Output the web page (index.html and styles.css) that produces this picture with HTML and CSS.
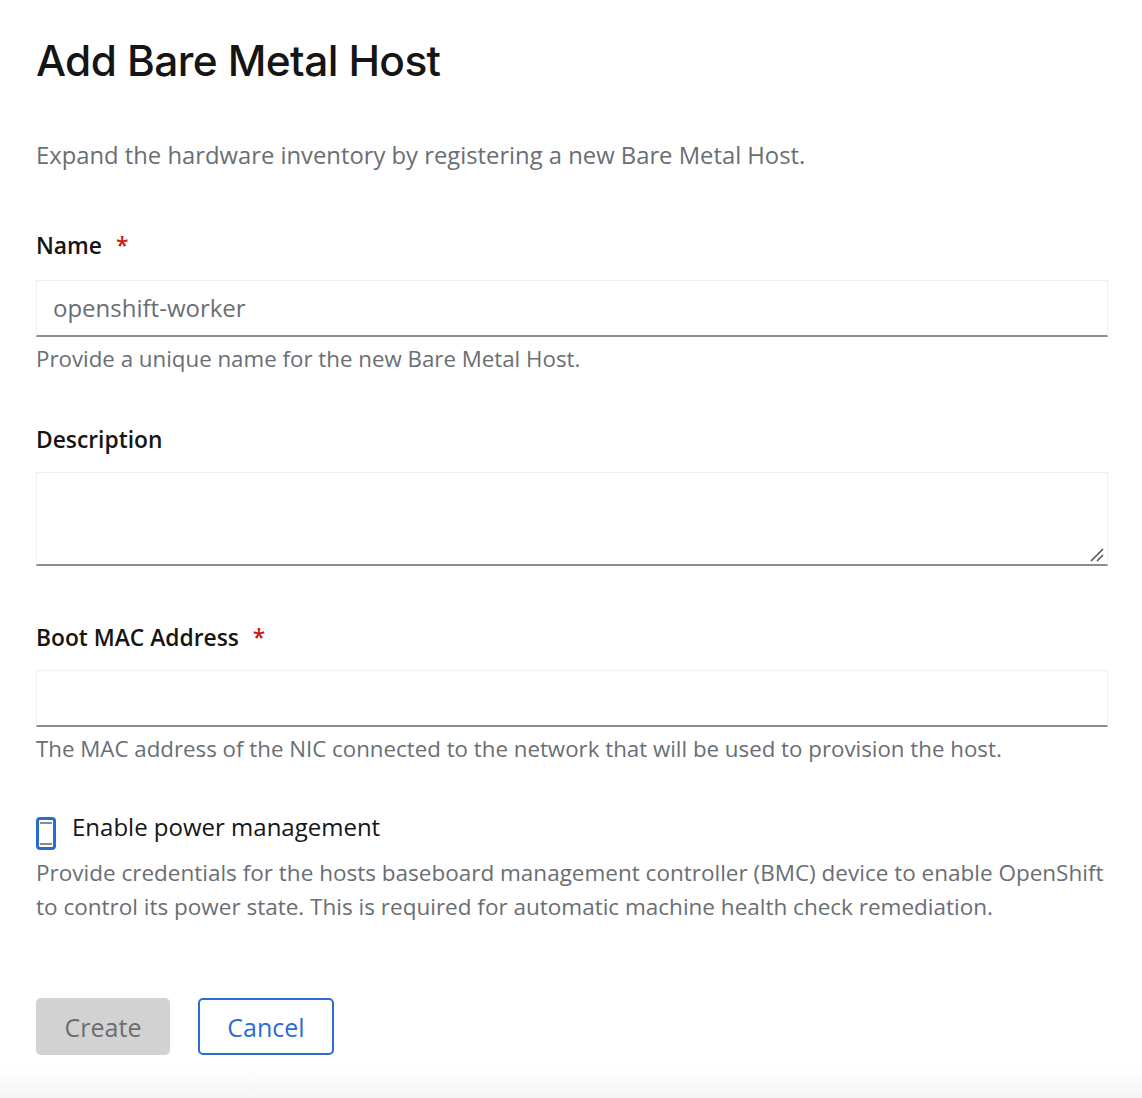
FILE: index.html
```html
<!DOCTYPE html>
<html>
<head>
<meta charset="utf-8">
<link rel="stylesheet" href="styles.css">
</head>
<body>
<div class="page">
  <h1 class="title">Add Bare Metal Host</h1>
  <p class="lead">Expand the hardware inventory by registering a new Bare Metal Host.</p>
  <form class="form">
    <div class="group g-name">
      <label class="label">Name <span class="req">*</span></label>
      <div class="input">openshift-worker</div>
      <div class="help">Provide a unique name for the new Bare Metal Host.</div>
    </div>
    <div class="group g-desc">
      <label class="label">Description</label>
      <div class="textarea">
        <svg class="grip" width="14" height="14" viewBox="0 0 14 14"><path d="M1 13 L13 1 M7 13 L13 7" stroke="#555" stroke-width="1.6" fill="none"/></svg>
      </div>
    </div>
    <div class="group g-mac">
      <label class="label">Boot MAC Address <span class="req">*</span></label>
      <div class="input"></div>
      <div class="help">The MAC address of the NIC connected to the network that will be used to provision the host.</div>
    </div>
    <div class="group g-check">
      <div class="check-row">
        <span class="checkbox"></span>
        <span class="check-label">Enable power management</span>
      </div>
      <div class="check-desc">Provide credentials for the hosts baseboard management controller (BMC) device to enable OpenShift to control its power state. This is required for automatic machine health check remediation.</div>
    </div>
    <div class="actions">
      <button type="button" class="btn btn-create">Create</button>
      <button type="button" class="btn btn-cancel">Cancel</button>
    </div>
  </form>
</div>
<div class="fade"></div>
</body>
</html>
```
FILE: styles.css
```css
html, body {
  margin: 0;
  padding: 0;
  background: #fff;
}
body {
  font-family: "Open Sans", "Liberation Sans", sans-serif;
  color: #151515;
  height: 1098px;
  overflow: hidden;
  position: relative;
}
.page {
  padding: 0 34px 0 36px;
}
.title {
  margin: 0;
  padding-top: 34px;
  font-family: "Inter", "Open Sans", sans-serif;
  font-weight: 500;
  font-size: 42.4px;
  line-height: 54px;
  letter-spacing: -0.6px;
  color: #151515;
}
.lead {
  margin: 50px 0 0;
  font-size: 23.8px;
  line-height: 34px;
  color: #6a6e73;
}
.form {
  display: flex;
  flex-direction: column;
}
.group {
  display: flex;
  flex-direction: column;
}
.g-name { margin-top: 59px; }
.g-desc { margin-top: 51px; }
.g-mac { margin-top: 57px; }
.g-check { margin-top: 48px; }
.label {
  font-size: 22.8px;
  font-weight: 600;
  line-height: 30px;
  color: #151515;
}
.req {
  color: #c9190b;
  margin-left: 8px;
}
.input {
  margin-top: 19px;
  height: 54px;
  border: 1px solid #f0f0f0;
  border-bottom: 2px solid #8a8d90;
  box-sizing: content-box;
  padding: 0 16px;
  font-size: 24px;
  line-height: 54px;
  color: #6a6e73;
}
.g-mac .input { margin-top: 17px; }
.help {
  margin-top: 7px;
  font-size: 22.3px;
  line-height: 30px;
  color: #6a6e73;
}
.textarea {
  margin-top: 17px;
  height: 91px;
  border: 1px solid #f0f0f0;
  border-bottom: 2px solid #8a8d90;
  position: relative;
}
.grip {
  position: absolute;
  right: 3px;
  bottom: 2px;
}
.check-row {
  display: flex;
  align-items: flex-start;
  gap: 16px;
}
.checkbox {
  margin-top: 5px;
  width: 14px;
  height: 27px;
  border: 3px solid #2b6cd4;
  border-radius: 4px;
  position: relative;
  flex: none;
}
.checkbox::before, .checkbox::after {
  content: "";
  position: absolute;
  left: 1px;
  right: 1px;
  height: 2px;
  background: #8a8d90;
}
.checkbox::before { top: 2px; }
.checkbox::after { bottom: 2px; }
.check-label {
  font-size: 24px;
  line-height: 30px;
  color: #151515;
}
.check-desc {
  margin-top: 6px;
  font-size: 22.5px;
  line-height: 34px;
  color: #6a6e73;
}
.actions {
  margin-top: 74px;
  display: flex;
  gap: 28px;
}
.btn {
  height: 57px;
  border-radius: 5px;
  font-family: inherit;
  font-size: 25px;
  padding: 0;
  cursor: pointer;
}
.btn-create {
  width: 134px;
  background: #d2d2d2;
  color: #6a6e73;
  border: none;
}
.btn-cancel {
  width: 136px;
  background: #fff;
  color: #2b6cd4;
  border: 2px solid #2b6cd4;
}
.fade {
  position: absolute;
  left: 0;
  right: 0;
  bottom: 0;
  height: 32px;
  background: linear-gradient(#ffffff, #f5f5f5);
}
```
